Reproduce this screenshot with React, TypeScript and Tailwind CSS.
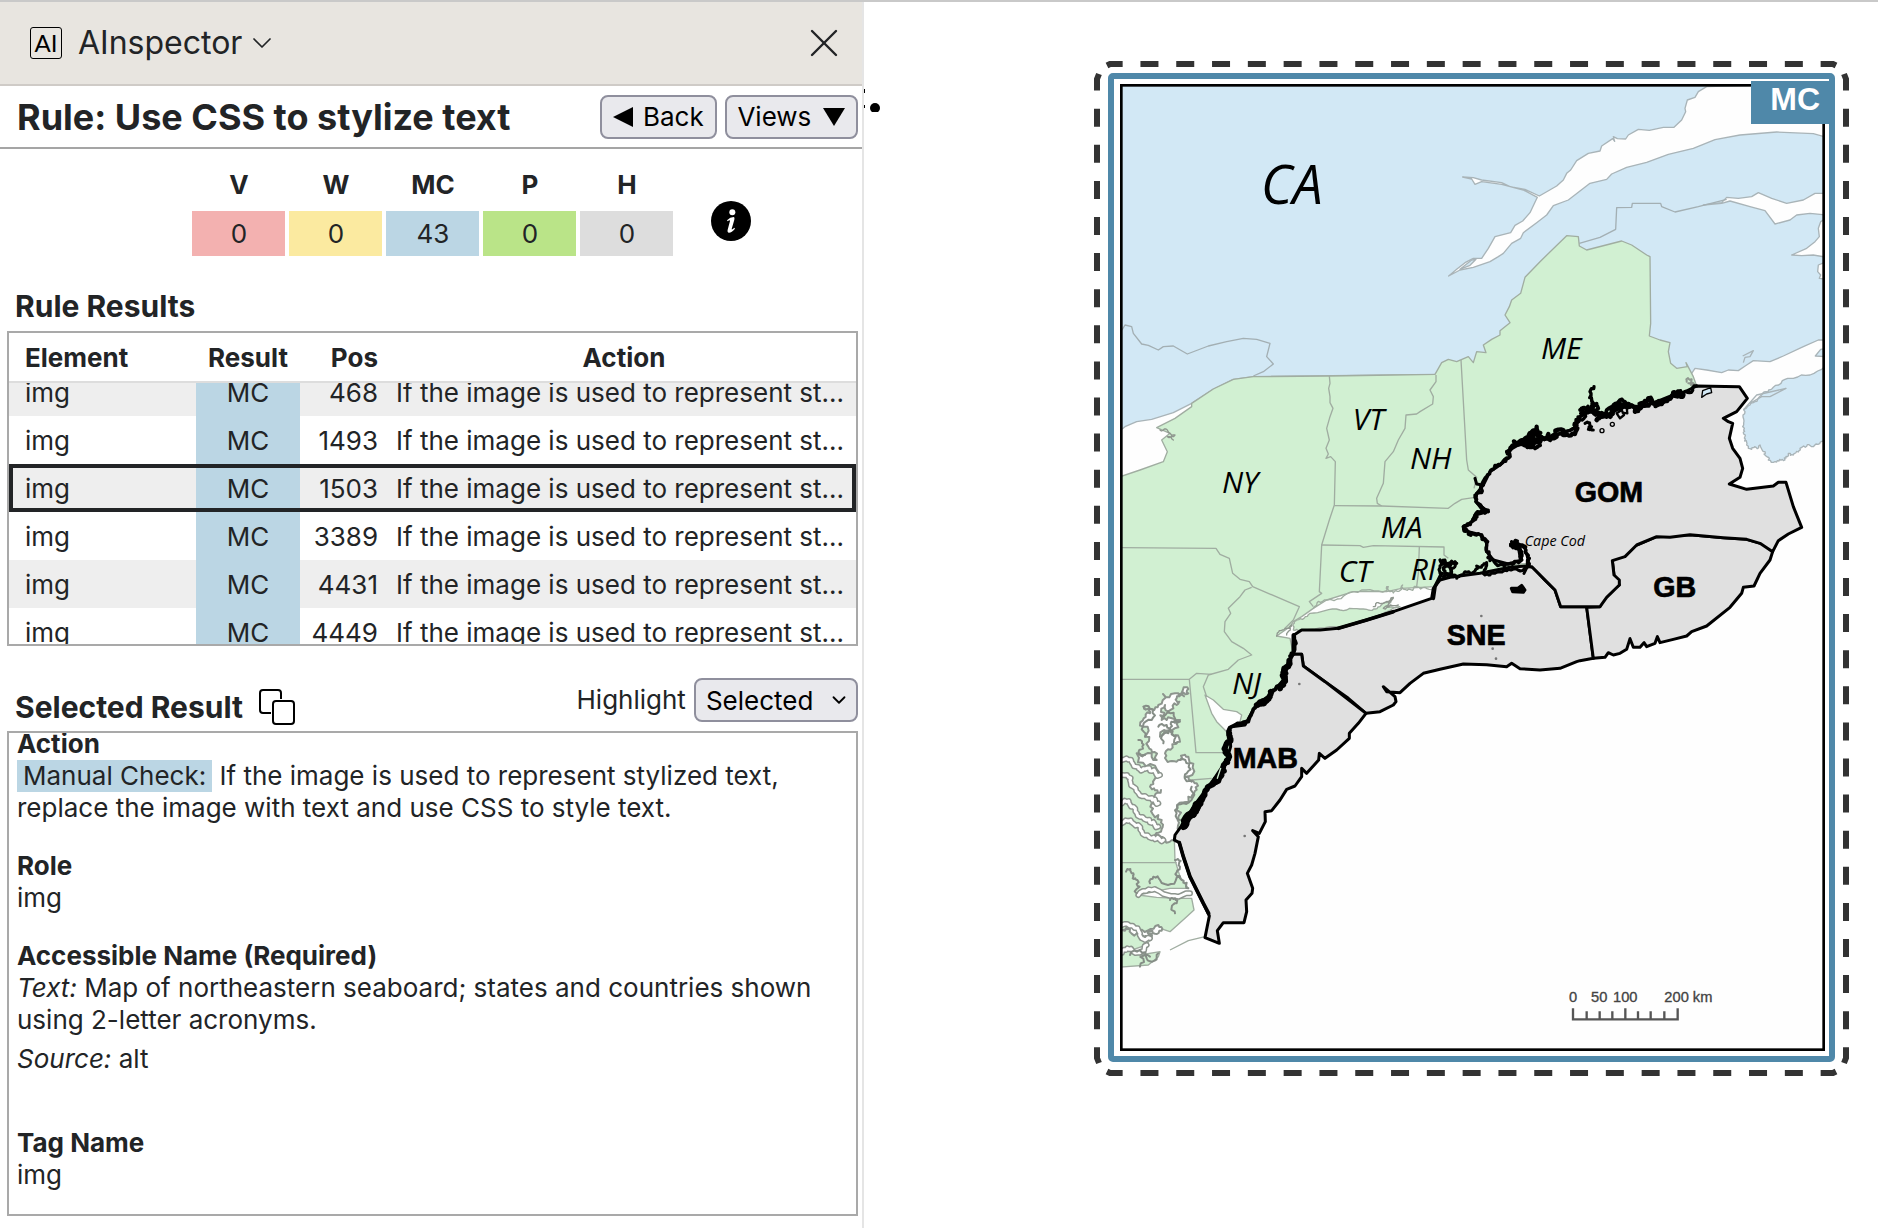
import { useLayoutEffect, useRef } from "react"
import { ChevronDown, X } from "lucide-react"

type Point = [number, number]

const summary = [
  { label: "V", value: 0, color: "bg-[#f3b1b0]" },
  { label: "W", value: 0, color: "bg-[#fbeaa0]" },
  { label: "MC", value: 43, color: "bg-[#bbd6e4]" },
  { label: "P", value: 0, color: "bg-[#bae488]" },
  { label: "H", value: 0, color: "bg-[#dddddd]" },
]

const rows = [468, 1493, 1503, 3389, 4431, 4449]
const selectedPos = 1503

// Turns a list of coordinates into a ragged shoreline by splitting each
// segment and pushing the middle points to the side.
function coast(points: string, amp: number, closed = false, ox = 0, oy = 0) {
  let seed = 7
  const rand = () => {
    seed = (seed * 16807) % 2147483647
    return seed / 2147483647 - 0.5
  }
  let pts: Point[] = points
    .trim()
    .split(/\s+/)
    .map((p) => {
      const [x, y] = p.split(",").map(Number)
      return [x + ox, y + oy]
    })
  if (closed) pts.push(pts[0])
  let a = amp
  for (let pass = 0; pass < 3; pass++) {
    const next: Point[] = [pts[0]]
    for (let i = 1; i < pts.length; i++) {
      const [x0, y0] = pts[i - 1]
      const [x1, y1] = pts[i]
      const len = Math.hypot(x1 - x0, y1 - y0)
      if (len > 7) {
        const push = (rand() * Math.min(a * 2, len)) / len
        next.push([
          Math.round((x0 + x1) / 2 - (y1 - y0) * push),
          Math.round((y0 + y1) / 2 + (x1 - x0) * push),
        ])
      }
      next.push([x1, y1])
    }
    pts = next
    a = a * 0.7
  }
  return "M" + pts.map((p) => p.join(",")).join("L") + (closed ? "Z" : "")
}

const GULF_SHORE =
  "770,78 730,98 700,105 650,125 600,140 550,140 500,165 450,155 420,170 405,205 350,225 275,250 235,255 200,275 210,290 180,315 150,335 130,375 110,400 108,425 125,440 145,455 105,465 95,485 70,500 85,515 125,525 140,550 140,575 160,600 205,612 245,600 240,590 235,560 212,553 235,552 255,565 265,600 262,620"

function SeaboardMap() {
  return (
    <svg
      viewBox="120 132 2115 2901"
      role="img"
      aria-label="Map of northeastern seaboard; states and countries shown using 2-letter acronyms."
      className="block h-auto w-full"
    >
      <rect x="120" y="132" width="2115" height="2901" fill="#fefefe" />

      {/* Canada */}
      <g fill="#d2e8f5" stroke="#a9b4b8" strokeWidth="4" strokeLinejoin="round">
        <path d="M120,132H2235V900L2215,900 2170,920 2110,948 2070,965 2020,962 2000,975 1975,992 1945,990 1925,998 1880,990 1845,985 1835,1000 1800,1010 1400,1040 1065,1003 520,1010 460,1018 400,1047 335,1090 280,1118 215,1138 170,1145 135,1160 120,1172Z" />
        <path
          d={coast(
            "2235,980 2140,1015 2080,1042 2045,1065 2010,1095 1995,1115 1988,1160 1995,1190 2000,1215 2015,1228 2040,1215 2055,1235 2065,1260 2085,1265 2115,1260 2125,1240 2140,1245 2165,1222 2200,1220 2235,1198",
            8,
          )}
        />
        <path d="M1990,1110L2030,1065 2118,1045 2070,1070 2045,1070 2010,1090" fill="none" />
      </g>
      <g fill="#fefefe" stroke="#a9b4b8" strokeWidth="4" strokeLinejoin="round">
        <path d="M2240,130L1880,140 1855,155 1845,172 1822,180 1815,205 1817,215 1805,240 1782,262 1750,262 1708,271 1675,268 1645,285 1637,297 1612,296 1600,290 1604,304 1598,296 1565,318 1560,333 1525,340 1490,362 1472,390 1460,400 1450,420 1430,438 1378,468 1335,448 1290,440 1265,428 1205,420 1180,413 1148,411 1175,417 1185,433 1205,425 1265,433 1330,450 1372,472 1350,518 1328,543 1305,556 1292,578 1245,590 1225,625 1205,655 1180,655 1155,668 1130,688 1106,708 1140,690 1180,682 1230,665 1255,650 1270,640 1295,610 1322,595 1330,578 1370,548 1400,525 1420,497 1465,480 1530,430 1580,418 1595,402 1640,382 1700,367 1765,343 1840,325 1905,299 1980,285 2090,276 2200,281 2240,292Z" />
        <path d="M1140,688L1175,660 1188,658 1170,676Z" fill="#d2e8f5" />
        <path d="M2240,460L2205,460 2170,480 2120,490 2075,475 2035,458 2015,470 1975,475 1940,472 1925,488 1870,495 1925,490 1950,483 2010,500 2055,512 2085,552 2130,540 2150,525 2190,520 2240,525Z" />
        <path d="M2240,535L2222,545 2215,565 2218,590 2205,605 2180,625 2135,645 2165,647 2200,645 2240,652Z" />
        <path d="M2240,665L2215,675 2213,695 2222,705 2218,715 2240,718Z" />
        <path d="M2240,925L2222,928 2206,948 2240,950Z" fill="#d2e8f5" />
        <path d="M1988,948L2020,932 2010,950 1995,952 1990,968" fill="none" />
      </g>
      <g fill="none" stroke="#a3afb3" strokeWidth="4" strokeLinejoin="round">
        <path d="M126,870L135,855 155,860 160,880 185,912 205,916 235,930 250,920 280,918 322,942 385,918 440,905 490,895 530,898 570,910 560,950 580,972 550,995 520,1008" />
        <path d="M1498,610L1560,592 1607,568 1610,503 1655,502 1657,490 1742,490 1745,500 1785,516 1855,500 1940,478" />
      </g>

      {/* United States */}
      <g fill="#d1f0d2" stroke="#a0ada1" strokeWidth="4" strokeLinejoin="round">
        <path d="M520,1010L748,1008 940,1005 1065,1003 1085,968 1105,958 1130,965 1165,950 1180,968 1190,935 1218,938 1210,915 1235,898 1260,885 1260,872 1290,848 1275,825 1288,800 1295,780 1322,760 1335,712 1380,665 1460,587 1495,590 1498,618 1520,630 1590,612 1625,603 1655,615 1700,645 1710,650 1712,850 1708,888 1740,900 1770,908 1765,935 1772,970 1790,985 1822,980 1818,968 1840,1010 1850,1038 1780,1080 1600,1140 1500,1190 1380,1240 1300,1270 1240,1340 1200,1380 1210,1420 1180,1460 1230,1500 1280,1575 1350,1570 1350,1590 1120,1612 1080,1612 1065,1640 1010,1643 965,1645 920,1655 860,1655 820,1655 740,1680 700,1705 665,1730 640,1745 630,1760 590,1788 630,1795 640,1843 620,1890 610,1930 560,1970 520,2010 495,2050 480,2045 485,2025 470,2015 430,2008 400,1980 375,1965 395,2020 410,2045 440,2075 450,2120 440,2170 400,2220 350,2290 300,2360 283,2400 285,2460 300,2510 325,2545 270,2545 175,2565 230,2572 290,2575 335,2575 342,2610 320,2630 270,2675 240,2665 200,2680 170,2665 210,2700 200,2715 150,2732 180,2745 240,2735 235,2750 205,2775 115,2782V1312L180,1290 250,1265 262,1235 245,1200 270,1180 230,1163 285,1135 335,1100 335,1090 400,1047 460,1018Z" />
        <path
          d={coast(
            "640,1770 650,1740 690,1720 780,1710 860,1708 900,1700 940,1675 920,1698 960,1700 900,1730 780,1762 660,1770",
            6,
            true,
          )}
        />
      </g>
      <g fill="none" stroke="#a0ada1" strokeWidth="4" strokeLinejoin="round">
        <path d="M748,1008L750,1030 746,1045 750,1070 750,1088 759,1105 750,1130 740,1165 748,1200 738,1225 745,1242 738,1255 752,1250 766,1265 763,1395 748,1440 725,1515 718,1655 725,1660 688,1685 700,1700" />
        <path d="M1068,1005L1068,1025 1050,1050 1060,1070 1058,1092 1020,1115 1010,1122 978,1125 975,1165 955,1200 940,1235 915,1265 910,1330 890,1375 892,1390 905,1398" />
        <path d="M1143,960L1160,1260 1165,1290 1190,1312 1182,1345" />
        <path d="M763,1397L905,1398 1105,1405 1125,1390 1145,1378 1185,1372" />
        <path d="M725,1515L840,1517 850,1522 880,1517 1092,1521 1092,1545 1105,1555M1018,1520L1015,1600 1010,1640" />
        <path d="M126,1523L408,1525 420,1543 448,1555 458,1600 480,1618 508,1625 518,1640 658,1700 640,1740 615,1765" />
        <path d="M515,1642L495,1650 480,1670 445,1705 452,1720 435,1745 433,1775 455,1805 490,1825 515,1845 475,1860 445,1888 385,1905 370,1940 380,1970" />
        <path d="M126,1918L328,1918 350,1900 395,1903M328,1918L348,2138 440,2138M335,2220L395,2215M126,2468L290,2468" />
        <path d="M270,2730L325,2702 375,2690" />
        <path d={coast("700,1705 740,1680 820,1655 920,1652 925,1640 930,1655 965,1648 968,1635 972,1648 1010,1640 1060,1642", 10)} />
      </g>

      {/* Chesapeake Bay, the sounds and the rivers behind them */}
      <g fill="#fefefe" stroke="#8c948d" strokeWidth="6" strokeLinejoin="round">
        <path
          d={coast(
            "322,1942 285,1960 235,1995 192,2000 210,2020 190,2060 205,2120 230,2160 170,2140 240,2200 210,2240 243,2250 215,2290 245,2340 225,2385 250,2395 285,2405 293,2340 325,2270 350,2230 315,2210 325,2150 290,2165 255,2140 300,2105 240,2090 300,2040 245,2040 255,1995 290,1995 290,1975 325,1960",
            22,
            true,
          )}
        />
        <path d={coast("126,2670 170,2660 235,2655 245,2672 205,2672 215,2690 185,2690 170,2680", 16, true)} />
      </g>
      <g fill="none" strokeLinejoin="round" strokeLinecap="round">
        {[
          "126,2160 170,2180 200,2185 240,2205",
          "126,2205 160,2240 210,2275 235,2290",
          "126,2290 160,2300 200,2340 235,2360",
          "126,2350 175,2355 215,2395 250,2400",
          "175,2565 240,2555 330,2560",
          "126,2655 180,2680 210,2695",
          "126,2738 160,2735 200,2715",
        ].map((river) => (
          <g key={river}>
            <path d={coast(river, 12)} stroke="#8c948d" strokeWidth="18" />
            <path d={coast(river, 12)} stroke="#fefefe" strokeWidth="9" />
          </g>
        ))}
        {[
          "138,2495 160,2500 172,2520 170,2560",
          "175,2100 178,2130 195,2145",
          "210,2530 240,2520 300,2510",
          "270,2580 290,2590 285,2620",
          "285,2460 300,2480 305,2520 325,2545",
          "150,2745 200,2755 235,2740",
          "180,2780 210,2750",
          "250,2030 300,2045 270,2070 290,2110",
          "235,2060 265,2080 250,2110",
          "190,2000 215,2040 195,2090",
          "300,2160 320,2200 335,2225",
          "300,2340 310,2290 335,2240",
        ].map((creek) => (
          <path key={creek} d={coast(creek, 20)} stroke="#858d86" strokeWidth="6" />
        ))}
        <path d={coast("240,1170 270,1180 285,1185 262,1190 280,1200", 8)} stroke="#8f978f" strokeWidth="4" />
        <path d={coast("880,1700 905,1690 940,1672 910,1705 955,1695", 8)} stroke="#8f978f" strokeWidth="4" />
        <path d={coast("590,1788 615,1765 635,1755 620,1785", 6)} stroke="#8f978f" strokeWidth="4" />
        <path d={coast("1820,1025 1835,1018 1842,1032 1825,1030", 10)} stroke="#8f978f" strokeWidth="6" />
      </g>

      {/* Ecological production units */}
      <g fill="#e0e0e0" stroke="#000" strokeWidth="9" strokeLinejoin="round">
        <path d="M642,1785L665,1770 720,1770 775,1765 860,1740 940,1715 1055,1675 1060,1645 1080,1620 1110,1612 1200,1600 1290,1582 1340,1578 1360,1582 1390,1615 1425,1650 1442,1700H1520L1540,1855 1500,1862 1490,1865 1440,1885 1380,1890 1320,1886 1295,1870 1280,1880 1220,1874 1150,1872 1080,1888 1030,1900 990,1930 960,1958 920,1955 910,1940 945,1970 948,1985 940,1995 900,2015 858,2020 805,1975 735,1925 670,1878 665,1843H640Z" />
        <path d="M640,1843H665L670,1878 735,1925 858,2020 835,2050 808,2080 808,2095 770,2130 735,2155 718,2140 716,2160 680,2200 665,2185 665,2210 645,2238 620,2248 600,2280 575,2312 555,2315 556,2345 538,2380 518,2372 535,2390 525,2440 515,2475 502,2500 518,2545 516,2560 498,2580 500,2615 492,2648H430L412,2672 418,2710 375,2693 388,2628 370,2590 330,2510 310,2450 298,2408 283,2400 285,2385 310,2350 340,2300 400,2220 440,2160 452,2120 450,2080 445,2070 455,2060 495,2055 525,2000 575,1960 610,1920 625,1870Z" />
        <g transform="translate(1080 960)">
          <path d="M998,575L990,600 960,640 942,678 910,682 905,700 870,742 800,798 755,815 740,828 700,838 660,848 652,830 645,850 620,860 612,848 600,862 580,862 570,836 560,868 540,880 520,885 505,878 495,892 460,895 440,742 480,740 500,700 538,675 522,645 517,602 590,555 650,530 750,524 850,533 920,538 970,552Z" />
          <path d="M770,78L898,80 922,115 890,155 850,175 865,185 878,190 868,235 878,265 900,295 908,325 900,352 868,372 920,388 1000,378 1015,367H1038L1060,440 1085,502 1045,522 1015,542 998,575 960,550 920,538 850,533 750,524 690,532 650,530 590,555 555,590 517,602 522,645 538,660 538,675 500,712 480,740H362L345,690 310,655 275,620 262,620 265,600 255,565 235,552 212,553 235,560 240,590 245,600 205,612 160,600 140,575 140,550 125,525 85,515 70,500 95,485 105,465 145,455 125,440 108,425 110,400 130,375 150,335 180,315 210,290 200,275 235,255 275,250 350,225 405,205 420,170 450,155 500,165 550,140 600,140 650,125 700,105 730,98Z" />
          <path d="M785,112L788,92 812,83 815,98 800,102Z" fill="#d2e8f5" strokeWidth="4" />
        </g>
      </g>

      {/* Rough black shore of the gulf and the barrier islands */}
      <g fill="none" stroke="#000" strokeLinejoin="round" strokeLinecap="round">
        <path d={coast(GULF_SHORE, 10, false, 1080, 960)} strokeWidth="10" />
        <g transform="translate(1080 960)" strokeWidth="9">
          <path d={coast("210,270 250,240 270,255 290,200 295,240 325,222 330,240 370,210 375,225 412,205", 14)} strokeWidth="13" />
          <path d={coast("240,250 275,262 300,240 255,235 290,215 270,250 320,235", 12)} strokeWidth="12" />
          <path d={coast("405,205 415,180 435,165 422,148 450,150 455,118 450,95 462,80", 8)} strokeWidth="10" />
          <path d={coast("420,150 465,155 460,130 440,150 480,165 500,150 520,135 555,125 570,140 540,150", 14)} strokeWidth="11" />
          <path d={coast("470,180 500,170 520,140 560,132 585,155 605,130 625,115 640,130 670,125 700,98 730,105", 12)} strokeWidth="14" />
          <path d="M530,160L540,175 552,165 545,150ZM548,158L562,160 560,142" strokeWidth="7" />
          <circle cx="486" cy="212" r="6" strokeWidth="4" />
          <circle cx="517" cy="193" r="6" strokeWidth="4" />
          <path d={coast("435,190 455,200 445,208 460,210", 8)} />
          <path d="M105,355L110,372 128,375M108,425L135,460 145,450" />
          <path d={coast("0,640 15,600 30,620 45,605 35,635 50,655 75,635 95,640 110,618 140,608 135,645 165,640 205,628 262,622", 8)} />
          <path d={coast("0,600 40,650 10,650 20,610 50,610", 10)} strokeWidth="10" />
          <path d="M262,600L262,620 252,640M240,560L245,598" />
          <path d="M214,685L235,684 245,676 255,690 250,697 218,695Z" fill="#000" />
        </g>
        <path d={coast("642,1785 642,1835 628,1865 618,1895 612,1930 580,1950 560,1985 530,1998 505,2045 455,2060 445,2080", 6)} strokeWidth="11" />
        <path d={coast("628,1862 612,1890 615,1920 600,1945", 6)} strokeWidth="18" />
        <path d={coast("572,1955 560,1982 530,1995", 4)} strokeWidth="17" />
        <path d={coast("448,2080 440,2110 448,2150 430,2180 425,2205 400,2230", 8)} strokeWidth="17" />
        <path d={coast("425,2195 400,2232 370,2270 350,2310 325,2335 310,2362", 6)} strokeWidth="17" />
        <path d={coast("350,2295 330,2325 314,2355", 6)} strokeWidth="25" />
        <path d="M640,1785V1843M775,1765L860,1740 940,1715M1060,1675L1065,1640 1075,1620 1085,1600" strokeWidth="11" />
        <path d="M298,2408L310,2450 330,2510 370,2590 386,2620" strokeWidth="11" />
        <path d="M422,2185L412,2215" stroke="#d1f0d2" strokeWidth="4" />
      </g>
      <g fill="#777">
        <circle cx="1204" cy="1728" r="4" />
        <circle cx="1238" cy="1826" r="4" />
        <circle cx="1248" cy="1856" r="4" />
        <circle cx="658" cy="1932" r="4" />
        <circle cx="494" cy="2388" r="4" />
      </g>

      <g className="font-['Open_Sans','Noto_Sans',sans-serif] italic" fill="#000">
        <text x="542" y="492" fontSize="162">CA</text>
        <g fontSize="90">
          <text x="1383" y="957">ME</text>
          <text x="818" y="1170">VT</text>
          <text x="990" y="1286">NH</text>
          <text x="426" y="1360">NY</text>
          <text x="902" y="1494">MA</text>
          <text x="776" y="1626">CT</text>
          <text x="992" y="1620">RI</text>
          <text x="456" y="1961">NJ</text>
        </g>
        <text x="1334" y="1519" fontSize="43">Cape Cod</text>
      </g>
      <g
        className="font-['Liberation_Sans',Arial,sans-serif] font-bold"
        fill="#000"
        stroke="#000"
        strokeWidth="2"
        fontSize="86"
      >
        <text x="1484" y="1385">GOM</text>
        <text x="1720" y="1672">GB</text>
        <text x="1100" y="1815">SNE</text>
        <text x="458" y="2185">MAB</text>
      </g>

      <g className="font-['Liberation_Sans',Arial,sans-serif]" fill="#444" stroke="#444" fontSize="44">
        <text x="1467" y="2885">0</text>
        <text x="1533" y="2885">50</text>
        <text x="1599" y="2885">100</text>
        <text x="1753" y="2885">200 km</text>
      </g>
      <path
        d="M1479,2905V2938H1793V2905M1520,2914V2936M1559,2914V2936M1597,2914V2936M1636,2905V2936M1674,2914V2936M1712,2914V2936M1753,2914V2936"
        fill="none"
        stroke="#555"
        strokeWidth="7"
      />
      <rect x="124" y="136" width="2107" height="2893" fill="none" stroke="#000" strokeWidth="8" />
    </svg>
  )
}

function DashedOutline() {
  return (
    <svg
      viewBox="1094 61 755 1015"
      preserveAspectRatio="none"
      aria-hidden="true"
      className="absolute inset-0 h-full w-full"
      fill="none"
      stroke="#333"
      strokeWidth="6"
    >
      <path d="M1107,65.5L1110,64H1833L1836,65.5" strokeDasharray="18 17.8" strokeDashoffset="2" />
      <path d="M1107,1071.5L1110,1073H1833L1836,1071.5" strokeDasharray="18 17.8" strokeDashoffset="2" />
      <path d="M1099,74L1097,79V1058L1099,1063" strokeDasharray="18 18.1" strokeDashoffset="1" />
      <path d="M1844,74L1846,79V1058L1844,1063" strokeDasharray="18 18.1" strokeDashoffset="1" />
    </svg>
  )
}

function ResultsTable() {
  const box = useRef<HTMLDivElement>(null)

  useLayoutEffect(() => {
    if (box.current) box.current.scrollTop = 15
  }, [])

  return (
    <div
      ref={box}
      className="h-[315px] shrink-0 overflow-y-auto border-2 border-[#a9a9a9] [scrollbar-width:none]"
    >
      <table className="w-full table-fixed border-separate border-spacing-0">
        <thead>
          <tr className="h-[50px]">
            <th className="sticky top-0 w-[187px] border-b-2 border-[#ddd] bg-white pl-4 text-left">Element</th>
            <th className="sticky top-0 w-[104px] border-b-2 border-[#ddd] bg-white text-center">Result</th>
            <th className="sticky top-0 w-[86px] border-b-2 border-[#ddd] bg-white pr-2 text-right">Pos</th>
            <th className="sticky top-0 border-b-2 border-[#ddd] bg-white pl-1.5 text-center">Action</th>
          </tr>
        </thead>
        <tbody>
          {rows.map((pos) => (
            <tr
              key={pos}
              aria-selected={pos === selectedPos}
              className={
                "h-12 odd:bg-[#eee] " +
                (pos === selectedPos ? "outline-4 -outline-offset-4 outline-[#222426]" : "")
              }
            >
              <td className="pl-4">img</td>
              <td className="bg-[#bbd6e4] text-center">MC</td>
              <td className="pr-2 text-right">{pos}</td>
              <td className="pl-2.5 whitespace-nowrap">If the image is used to represent st...</td>
            </tr>
          ))}
        </tbody>
      </table>
    </div>
  )
}

function SelectedDetails() {
  const box = useRef<HTMLDivElement>(null)

  useLayoutEffect(() => {
    if (box.current) box.current.scrollTop = 5
  }, [])

  return (
    <div
      ref={box}
      className="min-h-0 flex-1 overflow-y-auto border-2 border-[#a9a9a9] px-2 leading-8 [scrollbar-width:none]"
    >
      <h3 className="font-bold">Action</h3>
      <p>
        <span className="inline-block bg-[#bbd6e4] px-1.5">Manual Check:</span> If the image is used to
        represent stylized text, replace the image with text and use CSS to style text.
      </p>

      <h3 className="mt-[26px] font-bold">Role</h3>
      <p>img</p>

      <h3 className="mt-[26px] font-bold">Accessible Name (Required)</h3>
      <p>
        <em>Text:</em> Map of northeastern seaboard; states and countries shown using 2-letter acronyms.
      </p>
      <p className="mt-[7px]">
        <em>Source:</em> alt
      </p>

      <h3 className="mt-[52px] font-bold">Tag Name</h3>
      <p className="pb-[60px]">img</p>
    </div>
  )
}

export default function App() {
  return (
    <div className="flex h-screen border-t-2 border-[#c9c9c9] bg-white font-[Inter,sans-serif] text-[26px] text-[#222426]">
      <aside className="flex w-[46%] flex-col border-r-2 border-[#e5e5e5]">
        <header className="flex h-[84px] shrink-0 items-center border-b-2 border-[#cfcbc7] bg-[#e8e5e0] pr-3.5 pl-[30px]">
          <button className="flex items-center text-[32px]">
            <span className="flex size-8 items-center justify-center rounded-[3px] border border-black font-[Lato,sans-serif] text-[24px] leading-none text-black">
              AI
            </span>
            <span className="ml-4">AInspector</span>
            <ChevronDown size={32} strokeWidth={1.3} className="ml-1" />
          </button>
          <button aria-label="Close" className="ml-auto">
            <X size={48} strokeWidth={1.2} />
          </button>
        </header>

        <div className="flex h-[63px] shrink-0 items-center border-b-2 border-[#a5a5a5] pr-1 pl-[17px]">
          <h1 className="text-[36px] font-bold whitespace-nowrap">Rule: Use CSS to stylize text</h1>
          <button className="ml-auto flex h-11 w-[117px] items-center justify-center gap-2.5 rounded-lg border-2 border-[#8f8f9d] bg-[#e9e9ed] text-black">
            <svg width="20" height="20" viewBox="0 0 20 20" aria-hidden="true">
              <path d="M0,10L20,0V20Z" />
            </svg>
            Back
          </button>
          <button className="ml-2 flex h-11 w-[133px] items-center justify-center gap-3 rounded-lg border-2 border-[#8f8f9d] bg-[#e9e9ed] text-black">
            Views
            <svg width="22" height="18" viewBox="0 0 22 18" aria-hidden="true">
              <path d="M0,0H22L11,18Z" />
            </svg>
          </button>
        </div>

        <div className="flex items-center justify-center pt-[18px] pl-[78px]">
          <table className="border-separate border-spacing-x-1 border-spacing-y-0 text-center">
            <thead>
              <tr className="h-11">
                {summary.map((s) => (
                  <th key={s.label} className="w-[93px] pb-2 leading-9">
                    {s.label}
                  </th>
                ))}
              </tr>
            </thead>
            <tbody>
              <tr className="h-[45px]">
                {summary.map((s) => (
                  <td key={s.label} className={s.color}>
                    {s.value}
                  </td>
                ))}
              </tr>
            </tbody>
          </table>
          <button aria-label="Information" className="mt-[18px] ml-[34px]">
            <svg width="40" height="40" viewBox="0 0 120 120">
              <circle cx="60" cy="60" r="60" />
              <circle cx="64" cy="34" r="9" fill="#fff" />
              <path
                d="M48,58Q58,48 68,48Q72,49 70,56L62,84Q62,88 70,80L72,83Q62,95 54,95Q48,94 50,86L57,60Q57,55 50,61Z"
                fill="#fff"
              />
            </svg>
          </button>
        </div>

        <div className="flex min-h-0 flex-1 flex-col pr-1 pb-3 pl-[7px]">
          <h2 className="pt-[33px] pb-[7px] pl-2 text-[30px] leading-[35px] font-bold">Rule Results</h2>
          <ResultsTable />

          <div className="flex h-[85px] shrink-0 items-end pb-1.5">
            <h2 className="pl-2 text-[30px] leading-9 font-bold">Selected Result</h2>
            <button aria-label="Copy" className="ml-4">
              <svg width="36" height="36" viewBox="0 0 36 36" fill="#fff" stroke="#000" strokeWidth="2">
                <rect x="1" y="1" width="21" height="23" rx="3" />
                <rect x="12" y="10" width="24" height="26" fill="#fff" stroke="none" />
                <rect x="14" y="12" width="21" height="23" rx="3" />
              </svg>
            </button>
            <label htmlFor="highlight" className="ml-auto pb-1.5">
              Highlight
            </label>
            <div className="relative mb-[3px] ml-2">
              <select
                id="highlight"
                defaultValue="selected"
                className="block h-11 w-[164px] appearance-none rounded-lg border-2 border-[#8f8f9d] bg-[#e9e9ed] pl-2.5 text-black"
              >
                <option value="none">None</option>
                <option value="selected">Selected</option>
                <option value="all">All</option>
              </select>
              <ChevronDown
                size={22}
                strokeWidth={2}
                className="pointer-events-none absolute top-[11px] right-2 text-black"
              />
            </div>
          </div>
          <SelectedDetails />
        </div>
      </aside>

      <main className="flex min-w-0 flex-1 items-start justify-between overflow-hidden pr-[29px]">
        <svg width="18" height="24" viewBox="0 0 18 24" aria-hidden="true" className="mt-[86px] shrink-0">
          <circle cx="11" cy="20" r="5" />
          <path d="M0,1H1V5H0ZM0,17H1V20H0Z" />
        </svg>
        <figure className="relative mt-[59px] w-full max-w-[755px] px-3.5 pt-3 pb-3.5">
          <DashedOutline />
          <div className="relative rounded-[5px] border-6 border-[#4f88a9] py-[5px] pr-1 pl-1.5">
            <SeaboardMap />
            <span className="absolute top-0.5 right-0 flex h-[43px] w-[78px] items-start justify-end bg-[#4f88a9] pr-[9px] font-['Liberation_Sans',Arial,sans-serif] text-[32px] leading-[37px] font-bold text-white">
              MC
            </span>
          </div>
        </figure>
      </main>
    </div>
  )
}
